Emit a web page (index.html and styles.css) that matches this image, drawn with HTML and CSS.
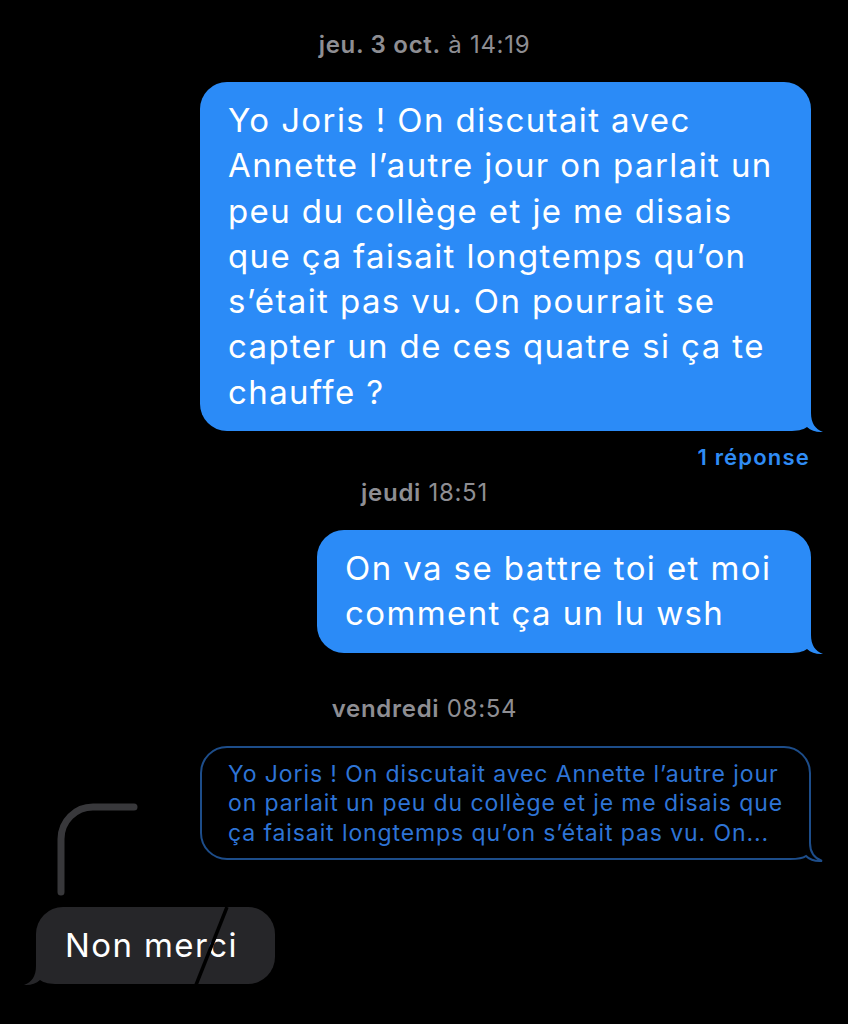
FILE: index.html
```html
<!DOCTYPE html>
<html lang="fr">
<head>
  <meta charset="UTF-8">
  <meta name="viewport" content="width=device-width, initial-scale=1.0">
  <title>Messages - Joris</title>
  <link rel="stylesheet" href="styles.css">
</head>
<body>
  <div class="thread">
    <p class="stamp stamp-first"><b>jeu. 3 oct.</b> à 14:19</p>

    <div class="msg out">
      <div class="bubble blue bubble-long">
        Yo Joris ! On discutait avec<br>
        Annette l’autre jour on parlait un<br>
        peu du collège et je me disais<br>
        que ça faisait longtemps qu’on<br>
        s’était pas vu. On pourrait se<br>
        capter un de ces quatre si ça te<br>
        chauffe ?
        <svg class="tail tail-right" width="44" height="38" viewBox="0 0 44 38"><path d="M30 0 L30 18 C30 28 34 34 42 37 C36 37.5 30 36 26 32 C22 35 16 36 8 36 L0 36 L0 0 Z"/></svg>
      </div>
    </div>
    <p class="reply-count">1 réponse</p>

    <p class="stamp stamp-second"><b>jeudi</b> 18:51</p>

    <div class="msg out">
      <div class="bubble blue bubble-short">
        On va se battre toi et moi<br>
        comment ça un lu wsh
        <svg class="tail tail-right" width="44" height="38" viewBox="0 0 44 38"><path d="M30 0 L30 18 C30 28 34 34 42 37 C36 37.5 30 36 26 32 C22 35 16 36 8 36 L0 36 L0 0 Z"/></svg>
      </div>
    </div>

    <p class="stamp stamp-third"><b>vendredi</b> 08:54</p>

    <div class="msg out">
      <div class="quote">
        Yo Joris ! On discutait avec Annette l’autre jour<br>
        on parlait un peu du collège et je me disais que<br>
        ça faisait longtemps qu’on s’était pas vu. On...
        <svg class="tail tail-right tail-outline" width="44" height="38" viewBox="0 0 44 38"><path d="M28 0 L28 18 C28 28 32 33 40 36 C34 36.5 28 35 24 31 C20 34 14 34 8 34 L0 34"/></svg>
      </div>
    </div>

    <div class="msg in">
      <svg class="reply-line" width="84" height="96" viewBox="0 0 84 96"><path d="M5 91 V38 A32 32 0 0 1 37 6 H78"/></svg>
      <div class="bubble gray">
        Non merci
        <svg class="crack" width="239" height="78" viewBox="0 0 239 78"><line x1="191" y1="0" x2="160" y2="78"/></svg>
        <svg class="tail tail-left" width="44" height="38" viewBox="0 0 44 38"><path d="M30 0 L30 18 C30 28 34 34 42 37 C36 37.5 30 36 26 32 C22 35 16 36 8 36 L0 36 L0 0 Z"/></svg>
      </div>
    </div>
  </div>
</body>
</html>
```

FILE: styles.css
```css
/* General */
body {
  margin: 0;
  background-color: #000;
  font-family: Inter, "Noto Sans", "Liberation Sans", sans-serif;
  color: #fff;
}

.thread {
  padding: 31px 37px 40px 36px;
}

/* Timestamps */
.stamp {
  margin: 0;
  text-align: center;
  font-size: 24px;
  line-height: 28px;
  letter-spacing: 0.7px;
  color: #8e8e93;
  padding-left: 2px;
}

.stamp b {
  font-weight: 600;
}

.stamp-first {
  margin-bottom: 23px;
}

.stamp-second {
  margin-top: 8px;
  margin-bottom: 23px;
}

.stamp-third {
  margin-top: 42px;
  margin-bottom: 23px;
}

.reply-count {
  margin: 12px 1px 0 0;
  text-align: right;
  font-size: 22px;
  line-height: 28px;
  letter-spacing: 1.2px;
  font-weight: 600;
  color: #2f8cf5;
}

/* Messages */
.msg {
  display: flex;
  position: relative;
}

.msg.out {
  justify-content: flex-end;
}

.msg.in {
  justify-content: flex-start;
  margin-top: 47px;
}

.bubble {
  position: relative;
  box-sizing: border-box;
  padding: 16px 28px;
  border-radius: 27px;
  font-size: 33px;
  line-height: 45.3px;
  letter-spacing: 1.4px;
  white-space: nowrap;
}

.blue {
  background-color: #2b8bf7;
}

.blue .tail path {
  fill: #2b8bf7;
}

.bubble-long {
  width: 611px;
}

.bubble-short {
  width: 494px;
}

.gray {
  width: 239px;
  padding: 16px 29px;
  background-color: #262629;
}

.gray .tail path {
  fill: #262629;
}

.quote {
  position: relative;
  box-sizing: border-box;
  width: 611px;
  padding: 12px 26px 10px;
  border: 2px solid #1d4d8a;
  border-radius: 27px;
  font-size: 23px;
  line-height: 29.5px;
  letter-spacing: 0.9px;
  color: #2e74d6;
  white-space: nowrap;
}

/* Tails */
.tail {
  position: absolute;
  bottom: -2px;
}

.tail-right {
  right: -14px;
}

.tail-left {
  left: -14px;
  transform: scaleX(-1);
}

/* offsets count from the padding box, inside the 2px border */
.quote .tail {
  right: -17px;
  bottom: -5px;
}

.tail-outline path {
  fill: #000;
  stroke: #1d4d8a;
  stroke-width: 2;
}

/* Reply thread line */
.reply-line {
  position: absolute;
  left: 20px;
  top: -106px;
}

.reply-line path {
  fill: none;
  stroke: #38383b;
  stroke-width: 7;
  stroke-linecap: round;
}

.crack {
  position: absolute;
  left: 0;
  top: 0;
}

.crack line {
  stroke: #000;
  stroke-width: 3.5;
}
```
